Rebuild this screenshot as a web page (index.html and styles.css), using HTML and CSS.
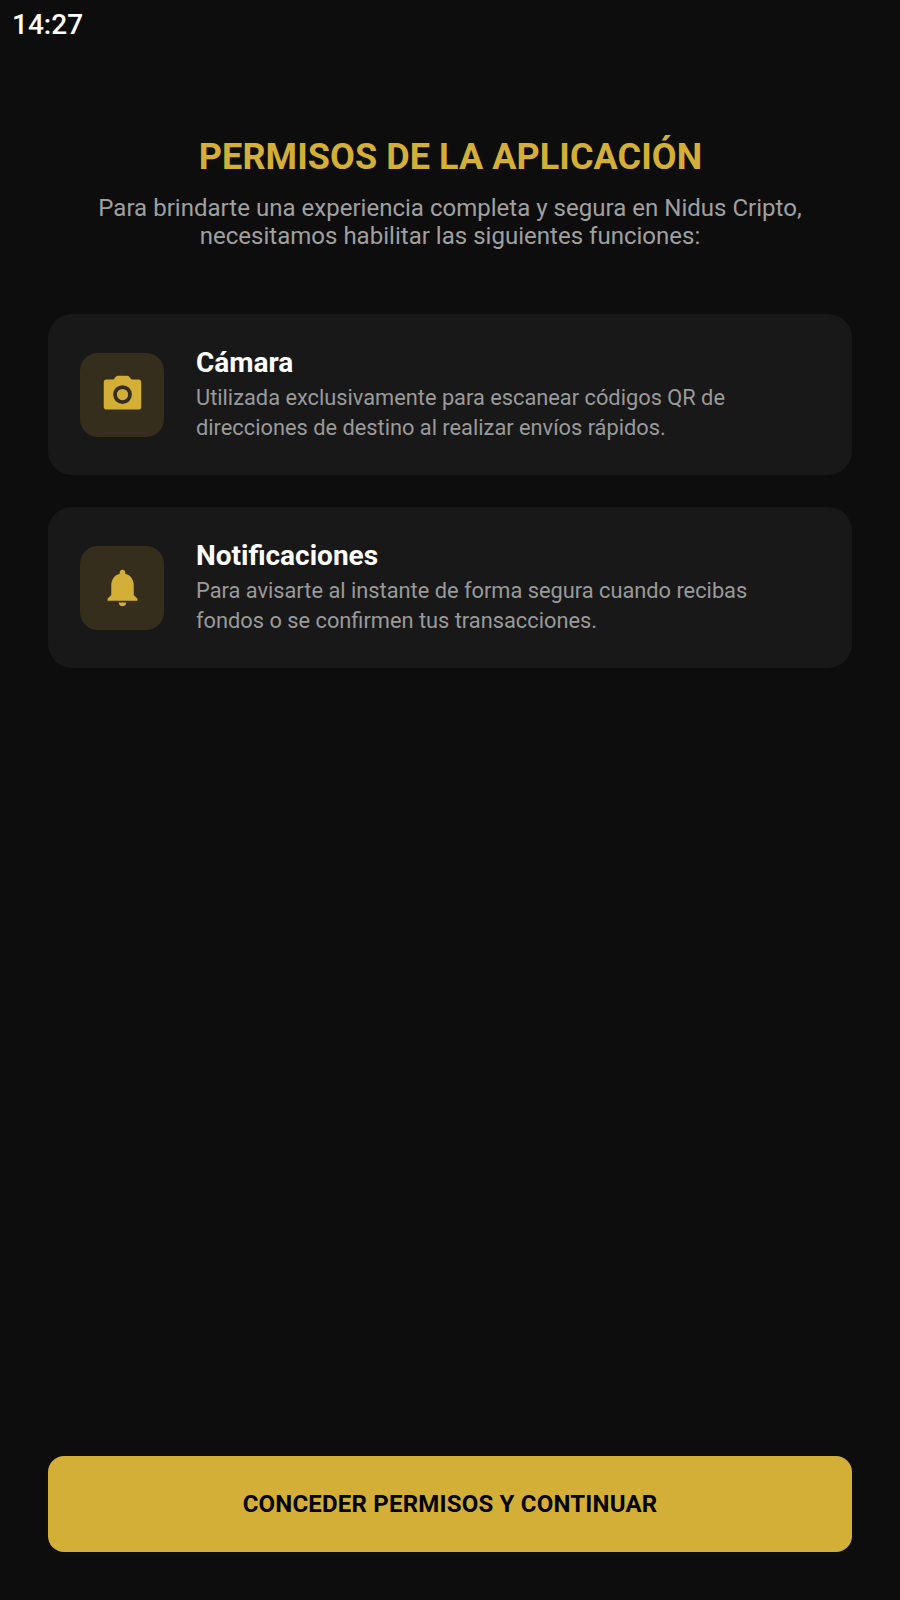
FILE: index.html
```html
<!DOCTYPE html>
<html lang="es">
<head>
<meta charset="utf-8">
<title>Permisos</title>
<link rel="stylesheet" href="styles.css">
</head>
<body>
<div class="screen">
  <div class="status">14:27</div>
  <header class="head">
    <h1 class="title">PERMISOS DE LA APLICACIÓN</h1>
    <p class="lead">Para brindarte una experiencia completa y segura en Nidus Cripto, necesitamos habilitar las siguientes funciones:</p>
  </header>
  <section class="cards">
    <article class="card">
      <div class="icon">
        <svg width="45" height="45" viewBox="0 0 24 24"><path class="glyph" fill-rule="evenodd" d="M9.500 2Q9 2 8.700 2.300L7.170 4H3.500A1.500 1.500 0 0 0 2 5.500v13A1.500 1.500 0 0 0 3.500 20h17a1.500 1.500 0 0 0 1.500-1.500v-13A1.500 1.500 0 0 0 20.500 4h-3.670L15.300 2.300Q15 2 14.500 2H9.500zM12 17a5 5 0 1 1 0-10 5 5 0 0 1 0 10zm0-2a3 3 0 1 0 0-6 3 3 0 0 0 0 6z"/></svg>
      </div>
      <div class="body">
        <h2 class="name">Cámara</h2>
        <p class="desc">Utilizada exclusivamente para escanear códigos QR de direcciones de destino al realizar envíos rápidos.</p>
      </div>
    </article>
    <article class="card">
      <div class="icon">
        <svg width="45" height="45" viewBox="0 0 24 24"><path class="glyph" d="M12 22c1.100 0 2-.9 2-2h-4c0 1.100.9 2 2 2zm6-6v-5c0-3.070-1.630-5.640-4.500-6.320V4c0-.83-.67-1.500-1.500-1.500s-1.500.67-1.500 1.500v.68C7.640 5.360 6 7.920 6 11v5l-2 2v1h16v-1l-2-2z"/></svg>
      </div>
      <div class="body">
        <h2 class="name">Notificaciones</h2>
        <p class="desc">Para avisarte al instante de forma segura cuando recibas fondos o se confirmen tus transacciones.</p>
      </div>
    </article>
  </section>
  <button class="cta" type="button">CONCEDER PERMISOS Y CONTINUAR</button>
</div>
</body>
</html>
```
FILE: styles.css
```css
* { box-sizing: border-box; }
html, body { margin: 0; padding: 0; }
body { background: #0d0d0d; font-family: Roboto, "Noto Sans", sans-serif; }
.screen { width: 900px; height: 1600px; display: flex; flex-direction: column; padding: 0 48px 48px; position: relative; background: #0d0d0d; }
.status { position: absolute; left: 12px; top: 8px; color: #fff; font-size: 28px; line-height: 34px; font-weight: 500; }
.head { margin-top: 133px; text-align: center; }
.title { margin: 0; padding-left: 1px; color: #d4af37; font-size: 36px; line-height: 48px; font-weight: 700; letter-spacing: 0.08px; }
.lead { margin: 13px 0 0; color: #a0a0a0; font-size: 24px; line-height: 28px; letter-spacing: 0.02px; }
.cards { margin-top: 64px; display: flex; flex-direction: column; gap: 32px; }
.card { height: 161px; background: #181818; border-radius: 24px; padding: 0 32px; display: flex; align-items: center; gap: 32px; }
.icon { width: 84px; height: 84px; flex: none; border-radius: 18px; background: #352e1d; display: flex; align-items: center; justify-content: center; }
.glyph { fill: #d4af37; }
.body { flex: 1; display: flex; flex-direction: column; gap: 4px; }
.name { margin: 0; color: #fff; font-size: 28px; line-height: 32px; font-weight: 700; }
.desc { margin: 0; color: #9a9a9a; font-size: 21.8px; line-height: 30px; }
.cta { margin-top: auto; height: 96px; width: 100%; border: 0; border-radius: 16px; background: #d4af37; color: #000; font-family: inherit; font-size: 24px; font-weight: 700; letter-spacing: 0.2px; }
```
